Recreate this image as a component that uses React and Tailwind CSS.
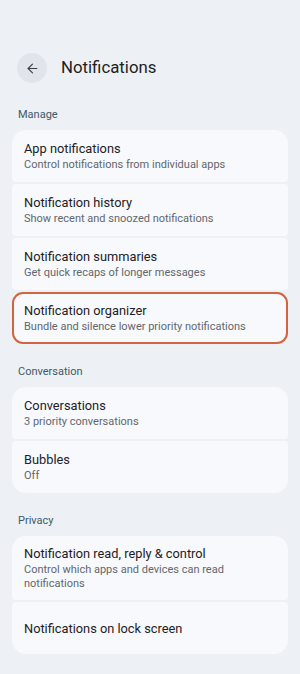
import { ArrowLeft } from 'lucide-react';

const sections = [
  {
    label: 'Manage',
    items: [
      { title: 'App notifications', sub: 'Control notifications from individual apps' },
      { title: 'Notification history', sub: 'Show recent and snoozed notifications' },
      { title: 'Notification summaries', sub: 'Get quick recaps of longer messages' },
      { title: 'Notification organizer', sub: 'Bundle and silence lower priority notifications', active: true },
    ],
  },
  {
    label: 'Conversation',
    items: [
      { title: 'Conversations', sub: '3 priority conversations' },
      { title: 'Bubbles', sub: 'Off' },
    ],
  },
  {
    label: 'Privacy',
    items: [
      { title: 'Notification read, reply & control', sub: 'Control which apps and devices can read notifications' },
      { title: 'Notifications on lock screen' },
    ],
  },
];

function Row({ item, first, last }) {
  let shape = 'rounded-[4px]';
  if (first && last) shape = 'rounded-[14px]';
  else if (first) shape = 'rounded-t-[14px] rounded-b-[4px]';
  else if (last) shape = 'rounded-b-[14px] rounded-t-[4px]';

  if (item.active) {
    shape = 'rounded-[11px] border-2 border-[#d2643f]';
  }

  return (
    <div
      className={`bg-[#f7f9fc] ${shape} ${item.active ? 'px-[10px]' : 'px-3'} flex flex-col justify-center ${
        item.sub && item.sub.length > 50 ? 'min-h-[64px] py-2' : 'min-h-[52px]'
      }`}
    >
      <div className="text-[12.8px] leading-[17px] text-[#1d2127]">{item.title}</div>
      {item.sub && (
        <div className="text-[11px] leading-[14px] text-[#62676d] mt-[1px] pr-6">{item.sub}</div>
      )}
    </div>
  );
}

export default function App() {
  return (
    <div
      className="w-[300px] h-[674px] bg-[#edf0f4] px-3 overflow-hidden"
      style={{ fontFamily: 'Roboto, "Open Sans", sans-serif' }}
    >
      <div className="flex items-center pt-[53px]">
        <div className="ml-[5px] w-[30px] h-[30px] rounded-full bg-[#e1e5eb] flex items-center justify-center">
          <ArrowLeft size={15} strokeWidth={1.8} color="#3c4046" />
        </div>
        <h1 className="ml-[14px] text-[16.8px] text-[#1b1f24]">Notifications</h1>
      </div>

      {sections.map((s, si) => (
        <div key={s.label}>
          <div
            className={`text-[11px] text-[#3e5a68] px-[6px] ${si === 0 ? 'mt-[24px]' : 'mt-[20px]'} mb-[7px] leading-[16px]`}
          >
            {s.label}
          </div>
          <div className="flex flex-col gap-[2px]">
            {s.items.map((item, i) => (
              <Row key={item.title} item={item} first={i === 0} last={i === s.items.length - 1} />
            ))}
          </div>
        </div>
      ))}
    </div>
  );
}
